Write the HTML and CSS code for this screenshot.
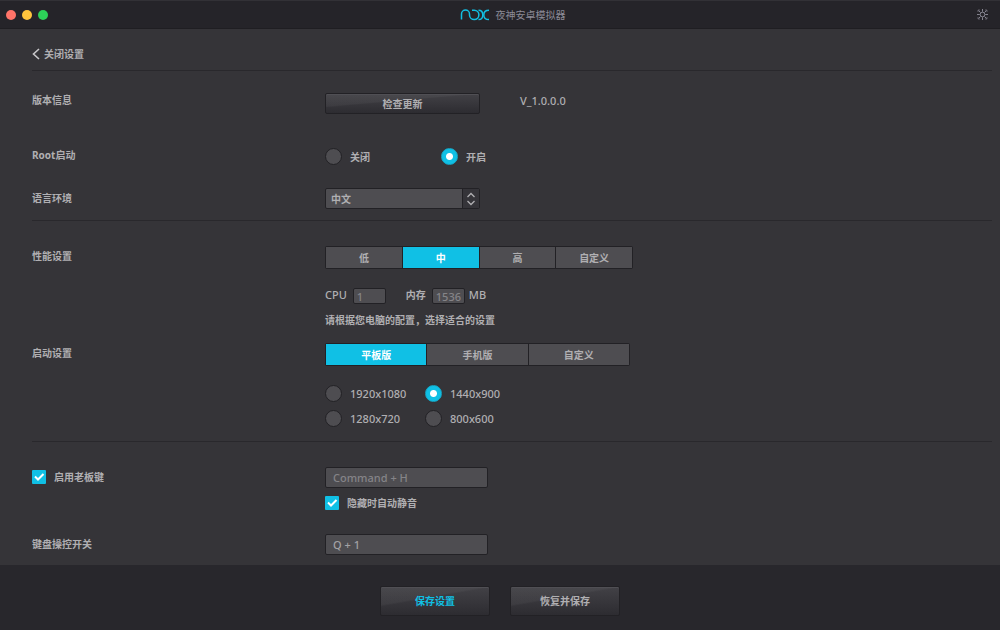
FILE: index.html
```html
<!DOCTYPE html>
<html lang="zh-CN">
<head>
<meta charset="utf-8">
<title>夜神安卓模拟器</title>
<link rel="stylesheet" href="styles.css">
</head>
<body>
<header class="titlebar">
  <div class="lights">
    <button class="light light-close" type="button" aria-label="关闭窗口"></button>
    <button class="light light-min" type="button" aria-label="最小化"></button>
    <button class="light light-max" type="button" aria-label="最大化"></button>
  </div>
  <div class="brand">
    <svg class="logo" viewBox="0 0 30 13" role="img" aria-label="Nox">
      <path d="M1.500 11.500V6a4 4 0 0 1 8 0v1a4.700 4.700 0 1 0 4.700-4.800h-2.200"/>
      <path d="M18.500 2.200c3.200 0 4.300 1.800 4.300 4.700s-1.300 4.700-4.300 4.700"/>
      <path d="M29 2.200c-3.600 0-5.200 1.800-5.200 4.700s1.600 4.700 5.200 4.700"/>
    </svg>
    <h1 class="brand-name">夜神安卓模拟器</h1>
  </div>
  <button class="gear" type="button" aria-label="设置">
    <svg viewBox="0 0 11 11">
      <circle cx="5.500" cy="5.500" r="2.300"/>
      <path d="M5.500 0v2.800M5.500 8.200v2.800M0 5.500h2.800M8.200 5.500h2.800M1.500 1.500l2 2M7.500 7.500l2 2M9.500 1.500l-2 2M3.500 7.500l-2 2"/>
      <path d="M1 3V1h2M8 1h2v2M10 8v2H8M3 10H1V8" stroke-opacity=".6"/>
    </svg>
  </button>
</header>

<form class="page">
  <main class="settings">
    <nav class="back">
      <a class="back-link" href="#">
        <svg class="chevron" viewBox="0 0 8 12"><path d="M7 1L1.500 6L7 11"/></svg>
        关闭设置
      </a>
    </nav>

    <section class="group">
      <div class="row row-compact">
        <span class="name">版本信息</span>
        <div class="version">
          <button class="btn btn-small" type="button">检查更新</button>
          <span>V_1.0.0.0</span>
        </div>
      </div>
      <div class="row row-compact" role="radiogroup" aria-labelledby="root-name">
        <span class="name" id="root-name">Root启动</span>
        <div class="choices choices-wide">
          <label class="choice"><input class="radio" type="radio" name="root">关闭</label>
          <label class="choice"><input class="radio" type="radio" name="root" checked>开启</label>
        </div>
      </div>
      <div class="row row-near">
        <label class="name" for="lang">语言环境</label>
        <div class="picker">
          <select class="select" id="lang"><option>中文</option><option>English</option></select>
          <svg class="picker-arrows" viewBox="0 0 16 19"><path d="M4.500 8L8 4.500L11.500 8M4.500 12L8 15.500L11.500 12"/></svg>
        </div>
      </div>
    </section>

    <section class="group">
      <div class="row">
        <span class="name">性能设置</span>
        <div class="stack">
          <div class="segments segments-four">
            <button class="segment" type="button">低</button>
            <button class="segment segment-on" type="button" aria-pressed="true">中</button>
            <button class="segment" type="button">高</button>
            <button class="segment" type="button">自定义</button>
          </div>
          <div class="specs">
            <label for="cpu">CPU</label>
            <input class="field field-tiny" id="cpu" type="text" value="1">
            <label class="spec-memory" for="memory">内存</label>
            <input class="field field-tiny" id="memory" type="text" value="1536">
            <span class="unit">MB</span>
          </div>
          <p class="hint">请根据您电脑的配置，选择适合的设置</p>
        </div>
      </div>
      <div class="row row-next">
        <span class="name">启动设置</span>
        <div class="stack">
          <div class="segments segments-three">
            <button class="segment segment-on" type="button" aria-pressed="true">平板版</button>
            <button class="segment" type="button">手机版</button>
            <button class="segment" type="button">自定义</button>
          </div>
          <div class="choices choices-sizes">
            <label class="choice"><input class="radio" type="radio" name="size">1920x1080</label>
            <label class="choice"><input class="radio" type="radio" name="size" checked>1440x900</label>
            <label class="choice"><input class="radio" type="radio" name="size">1280x720</label>
            <label class="choice"><input class="radio" type="radio" name="size">800x600</label>
          </div>
        </div>
      </div>
    </section>

    <section class="group">
      <div class="row">
        <label class="choice name"><input class="check" type="checkbox" checked>启用老板键</label>
        <div>
          <input class="field field-dim" type="text" value="Command + H" aria-label="老板键">
          <label class="choice mute"><input class="check" type="checkbox" checked>隐藏时自动静音</label>
        </div>
      </div>
      <div class="row row-keys">
        <label class="name" for="keys">键盘操控开关</label>
        <div><input class="field" id="keys" type="text" value="Q + 1"></div>
      </div>
    </section>
  </main>

  <footer class="actions">
    <button class="btn btn-save" type="button">保存设置</button>
    <button class="btn" type="button">恢复并保存</button>
  </footer>
</form>
</body>
</html>
```
FILE: styles.css
```css
:root {
  --panel: #353438;
  --bar: #28272c;
  --edge: #222125;
  --control: #4e4d51;
  --text: #b0afb2;
  --accent: #10c0e5;
  --latin: "Noto Sans", "Noto Sans CJK SC", sans-serif;
}

* { box-sizing: border-box; }

body {
  margin: 0;
  min-height: 100vh;
  display: flex;
  flex-direction: column;
  background: var(--panel);
  color: var(--text);
  font: 500 10px/14px var(--latin);
}

button, input, select { font: inherit; color: inherit; margin: 0; }
button { padding: 0; border: 0; }
svg { display: block; fill: none; stroke: currentColor; }

.titlebar {
  display: flex;
  align-items: center;
  justify-content: space-between;
  height: 29px;
  padding: 0 12px 0 6px;
  background: #252429;
  border-top: 1px solid #323136;
  border-bottom: 1px solid #1f1e22;
}
.lights { display: flex; gap: 6px; }
.light { width: 10px; height: 10px; border-radius: 50%; }
.light-close { background: #ff7469; }
.light-min { background: #ffc53d; }
.light-max { background: #2dd158; }
.brand { display: flex; align-items: center; gap: 6px; }
.logo { width: 30px; height: 13px; color: #12bfe2; stroke-width: 1.5; }
.brand-name { margin: 0; font-size: 10px; font-weight: 400; color: #8c8b97; }
.gear { background: none; color: #85848f; }
.gear svg { width: 11px; height: 11px; }

.page { flex: 1; display: flex; flex-direction: column; }
.settings { flex: 1; padding: 0 8px 10px 32px; }
.back { padding: 14px 0 5px; }
.back-link {
  display: flex;
  align-items: center;
  gap: 4px;
  line-height: 22px;
  color: inherit;
  text-decoration: none;
  font-weight: 700;
}
.chevron { width: 8px; height: 12px; stroke-width: 1.6; color: #c8c7ca; }

.group { border-top: 1px solid #29282c; padding: 25px 0 14px; }
.group:first-of-type { padding: 22px 0 11px; }
.group:last-of-type { padding-bottom: 0; }
.row { display: grid; grid-template-columns: 293px 1fr; align-items: start; }
.row + .row { margin-top: 34px; }
.row + .row-near { margin-top: 23px; }
.row + .row-next { margin-top: 16px; }
.row + .row-keys { margin-top: 22px; }
.name { line-height: 20px; font-weight: 700; }
.row-compact .name { line-height: 14px; }

.version { display: flex; align-items: start; gap: 40px; font-size: 11px; line-height: 16px; }

.btn {
  width: 110px;
  height: 30px;
  border: 1px solid var(--edge);
  border-radius: 2px;
  background:
    linear-gradient(170deg, #ffffff0a 38%, #ffffff00 42%),
    linear-gradient(#424146, #2d2c31);
  box-shadow: inset 0 1px #504f54;
  font-size: 10px;
  line-height: 14px;
  font-weight: 700;
}
.btn-small {
  width: 155px;
  height: 21px;
  background:
    linear-gradient(175deg, #ffffff0a 38%, #ffffff00 42%),
    linear-gradient(#424146, #2d2c31);
}
.btn-save { color: var(--accent); }

.choices { display: grid; justify-content: start; font-size: 11px; }
.choices-wide { grid-template-columns: 116px auto; font-size: 10px; }
.choices-sizes { grid-template-columns: 100px auto; row-gap: 8px; margin-top: 19px; }
.choice { display: flex; align-items: center; gap: 8px; }
.choices-wide .choice { font-weight: 700; }
.radio, .check { appearance: none; flex: none; }
.radio {
  width: 17px;
  height: 17px;
  border: 1px solid var(--edge);
  border-radius: 50%;
  background: var(--control);
}
.radio:checked {
  border-color: #14a9c9;
  background: radial-gradient(circle, #fff 3px, var(--accent) 4px);
}
.check {
  width: 14px;
  height: 14px;
  border-radius: 1px;
  background: var(--control);
}
.check:checked {
  background: var(--accent) url("data:image/svg+xml,%3Csvg xmlns='http://www.w3.org/2000/svg' viewBox='0 0 14 14'%3E%3Cpath d='M3 6.500l3 3 5.500-5.500' fill='none' stroke='white' stroke-width='2'/%3E%3C/svg%3E");
}
.mute { margin-top: 6px; line-height: 18px; font-weight: 700; }

.picker { position: relative; width: 155px; }
.select {
  appearance: none;
  display: block;
  width: 100%;
  height: 21px;
  padding: 0 22px 0 5px;
  border: 1px solid var(--edge);
  border-radius: 2px;
  background: var(--control);
  font-weight: 700;
}
.picker-arrows {
  position: absolute;
  top: 1px;
  right: 1px;
  width: 16px;
  height: 19px;
  background: #353439;
  box-shadow: -1px 0 var(--edge);
  stroke-width: 1.3;
  pointer-events: none;
}

.segments {
  display: grid;
  gap: 1px;
  height: 23px;
  padding: 1px;
  border-radius: 2px;
  background: var(--edge);
}
.segments-four { width: 308px; grid-template-columns: repeat(4, 1fr); }
.segments-three { width: 305px; grid-template-columns: repeat(3, 1fr); }
.segment { background: var(--control); font-weight: 700; }
.segment-on { background: var(--accent); color: #fff; }

.specs { display: flex; align-items: start; margin-top: 19px; font-size: 11px; }
.specs .field { margin-left: 6px; }
.specs .spec-memory { margin-left: 20px; font-size: 10px; font-weight: 700; }
.specs .unit { margin-left: 4px; }
.hint { margin: 9px 0 0; font-weight: 700; }

.field {
  display: block;
  width: 163px;
  height: 21px;
  padding: 0 7px;
  border: 1px solid var(--edge);
  border-radius: 2px;
  background: var(--control);
  color: #a3a2a5;
  font-size: 11px;
}
.field-tiny { width: 33px; height: 16px; padding: 0 3px; color: #858488; }
.field-dim { color: #858488; }

.actions {
  display: flex;
  justify-content: center;
  gap: 20px;
  padding: 21px 0 14px;
  background: var(--bar);
}
```
